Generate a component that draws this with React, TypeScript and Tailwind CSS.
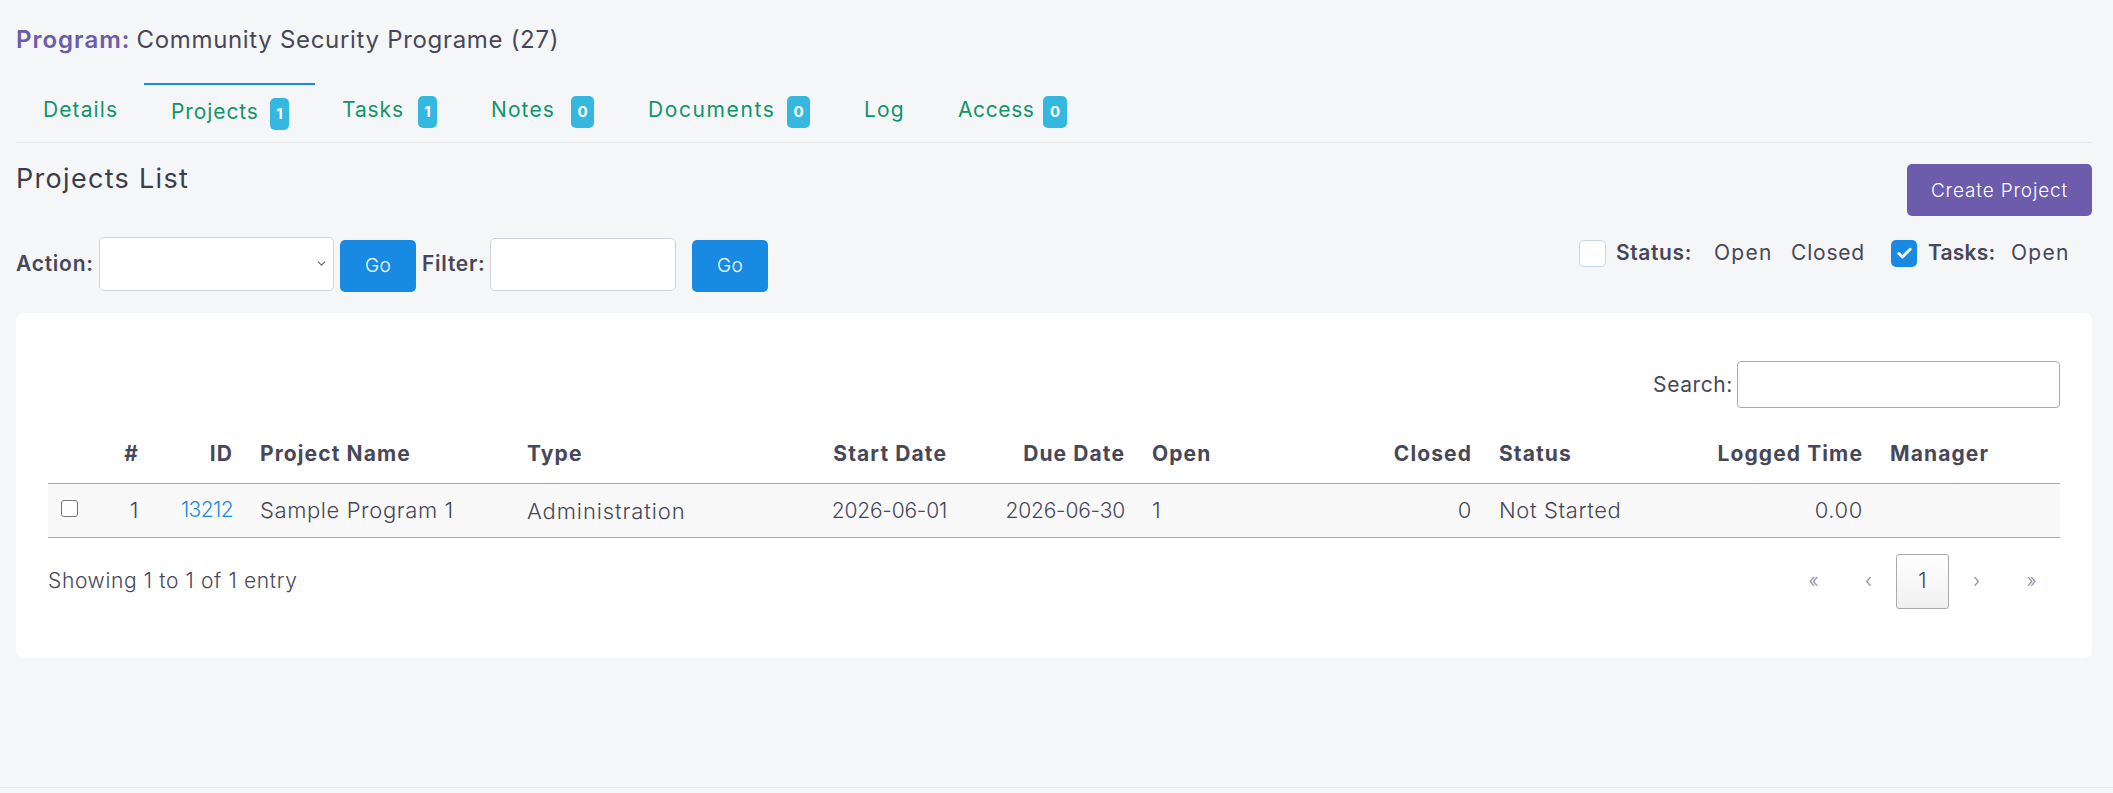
import { Check, ChevronDown } from 'lucide-react'

const tabs = [
  { label: 'Details', labelW: 'w-[74px]', badge: null, badgeW: '', active: false },
  { label: 'Projects', labelW: 'w-[99px] tracking-[0.9px]', badge: '1', badgeW: 'w-[19px] -mr-[1px]', active: true },
  { label: 'Tasks', labelW: 'w-[76px] tracking-[0.9px]', badge: '1', badgeW: 'w-[19px]', active: false },
  { label: 'Notes', labelW: 'w-[80px]', badge: '0', badgeW: 'w-[23px]', active: false },
  { label: 'Documents', labelW: 'w-[139px] tracking-[1.6px]', badge: '0', badgeW: 'w-[23px]', active: false },
  { label: 'Log', labelW: 'w-[40px]', badge: null, badgeW: '', active: false },
  { label: 'Access', labelW: 'w-[85px] tracking-[0.6px]', badge: '0', badgeW: 'w-[24px]', active: false },
]

const headers = [
  ['', 'text-left'], ['#', 'text-right'], ['ID', 'text-right'], ['Project Name', 'text-left'],
  ['Type', 'text-left'], ['Start Date', 'text-right'], ['Due Date', 'text-right'], ['Open', 'text-left'],
  ['Closed', 'text-right'], ['Status', 'text-left'], ['Logged Time', 'text-right'], ['Manager', 'text-left'],
]

export default function App() {
  return (
    <div className="h-[793px] flex flex-col bg-[#f5f6f8] text-[#474759] text-[21px] tracking-[1.1px] font-['Inter',sans-serif] overflow-hidden">
      <div className="flex-1 pl-4 pr-[21px]">
        <div className="h-[83px] pb-[3px] flex items-center text-[24px] tracking-[0.68px]">
          <span className="font-semibold text-[#6c5cab] mr-[6px] tracking-[1px]">Program:</span>
          <span>Community Security Programe (27)</span>
        </div>

        <div className="h-[60px] flex border-b border-[#e6e8ee]">
          {tabs.map(t => (
            <div key={t.label} className={`px-[27px] flex items-start text-[#12946a] border-t-2 ${t.active ? 'border-[#188ae2] pt-[13px]' : 'border-transparent pt-[11px]'}`}>
              <span className={`leading-[28px] whitespace-nowrap ${t.labelW}`}>{t.label}</span>
              {t.badge && (
                <span className={`h-[32px] rounded-[5px] bg-[#35b8e0] text-white text-[15px] tracking-normal font-bold flex items-center justify-center ${t.badgeW}`}>{t.badge}</span>
              )}
            </div>
          ))}
        </div>

        <div className="flex justify-between">
          <div>
            <h2 className="mt-[18px] text-[27px] leading-[36px] tracking-[1.3px] text-[#3c3c4a]">Projects List</h2>
            <div className="mt-[40px] flex items-start">
              <label className="w-[83px] h-[54px] flex items-center font-semibold tracking-[0.75px]">Action:</label>
              <div className="relative">
                <select className="block appearance-none w-[235px] h-[54px] bg-white border border-[#ced4da] rounded-[5px]" />
                <ChevronDown className="absolute right-[6px] top-[20px] w-[13px] h-[13px] text-[#666666]" strokeWidth={2} />
              </div>
              <button className="ml-[6px] mt-[3px] w-[76px] h-[52px] bg-[#188ae2] rounded-[5px] text-white text-[19px] tracking-[0.4px] font-light">Go</button>
              <label className="ml-[6px] w-[68px] h-[54px] flex items-center font-semibold tracking-[0.75px]">Filter:</label>
              <input className="mt-[1px] w-[186px] h-[53px] bg-white border border-[#ced4da] rounded-[5px]" />
              <button className="ml-[16px] mt-[3px] w-[76px] h-[52px] bg-[#188ae2] rounded-[5px] text-white text-[19px] tracking-[0.4px] font-light">Go</button>
            </div>
          </div>
          <div className="flex flex-col items-end">
            <button className="mt-[21px] pt-[2px] w-[185px] h-[52px] bg-[#6c5cab] rounded-[5px] text-white text-[19px] tracking-[0.85px] font-light">Create Project</button>
            <div className="mt-[24px] mr-[22px] h-[27px] flex items-center whitespace-nowrap">
              <span className="w-[27px] h-[27px] bg-white border border-[#c5d6e6] rounded-[5px]" />
              <span className="ml-[10px] pb-[2px] w-[98px] font-semibold tracking-[0.6px]">Status:</span>
              <span className="pb-[2px] w-[77px] tracking-[1.3px]">Open</span>
              <span className="pb-[2px] w-[100px] tracking-[0.8px]">Closed</span>
              <span className="w-[26px] h-[27px] bg-[#188ae2] rounded-[5px] flex items-center justify-center">
                <Check className="w-[17px] h-[17px] text-white" strokeWidth={4} />
              </span>
              <span className="ml-[11px] pb-[2px] w-[83px] font-semibold tracking-[0.2px]">Tasks:</span>
              <span className="pb-[2px] w-[59px] tracking-[1.3px]">Open</span>
            </div>
          </div>
        </div>

        <div className="mt-[21px] h-[345px] bg-white rounded-lg px-8 pt-12">
          <div className="flex justify-end items-center">
            <label className="mr-[4px] tracking-[0.6px]">Search:</label>
            <input className="w-[323px] h-[47px] border border-[#aaaaaa] rounded-[4px]" />
          </div>

          <table className="w-full table-fixed border-collapse">
            <colgroup>
              <col className="w-[52px]" />
              <col className="w-[52px]" />
              <col className="w-[94px]" />
              <col className="w-[267px]" />
              <col className="w-[277px]" />
              <col className="w-[170px]" />
              <col className="w-[178px]" />
              <col className="w-[162px]" />
              <col className="w-[185px]" />
              <col className="w-[195px]" />
              <col className="w-[196px]" />
              <col />
            </colgroup>
            <thead>
              <tr className="h-[75px] border-b border-[#aaaaaa]">
                {headers.map(([h, align], i) => (
                  <th key={i} className={`pl-[14px] pr-[13px] pb-[17px] align-bottom font-bold tracking-[1.1px] whitespace-nowrap leading-[24px] ${align}`}>{h}</th>
                ))}
              </tr>
            </thead>
            <tbody>
              <tr className="h-[54px] bg-[#f9f9f9] border-b border-[#aaaaaa] font-light whitespace-nowrap text-[22px] tracking-[0.6px]">
                <td className="pl-[13px] pb-[4px]"><input type="checkbox" className="block appearance-none w-[17px] h-[17px] bg-white border border-[#767676] rounded-[3px]" /></td>
                <td className="pl-[14px] pr-[13px] text-right">1</td>
                <td className="pl-[14px] pr-[13px] text-right text-[#188ae2] text-[21px] tracking-[-0.6px]">13212</td>
                <td className="pl-[14px] pr-[13px]">Sample Program 1</td>
                <td className="pl-[14px] pr-[13px] pt-[3px] tracking-[0.9px]">Administration</td>
                <td className="pl-[14px] pr-[13px] pt-[1px] text-right text-[21px] tracking-[-0.2px]">2026-06-01</td>
                <td className="pl-[14px] pr-[13px] pt-[1px] text-right text-[21px] tracking-[-0.2px]">2026-06-30</td>
                <td className="pl-[14px] pr-[13px]">1</td>
                <td className="pl-[14px] pr-[13px] text-right">0</td>
                <td className="pl-[14px] pr-[13px]">Not Started</td>
                <td className="pl-[14px] pr-[13px] text-right">0.00</td>
                <td className="pl-[14px] pr-[13px]" />
              </tr>
            </tbody>
          </table>

          <div className="mt-[16px] flex justify-between items-center font-light">
            <span className="tracking-[0.64px]">Showing 1 to 1 of 1 entry</span>
            <div className="flex items-center text-[#8a8a95] text-[19px] tracking-normal mr-[1px]">
              <span className="w-[55px] text-center">«</span>
              <span className="w-[55px] text-center">‹</span>
              <span className="w-[53px] h-[55px] border border-[#aaaaaa] rounded-[3px] bg-gradient-to-b from-white to-[#f0f0f0] text-[#474759] text-[21px] flex items-center justify-center">1</span>
              <span className="w-[55px] text-center">›</span>
              <span className="w-[55px] text-center">»</span>
            </div>
          </div>
        </div>
      </div>
      <div className="h-[6px] border-t border-[#e6e8ee]" />
    </div>
  )
}
